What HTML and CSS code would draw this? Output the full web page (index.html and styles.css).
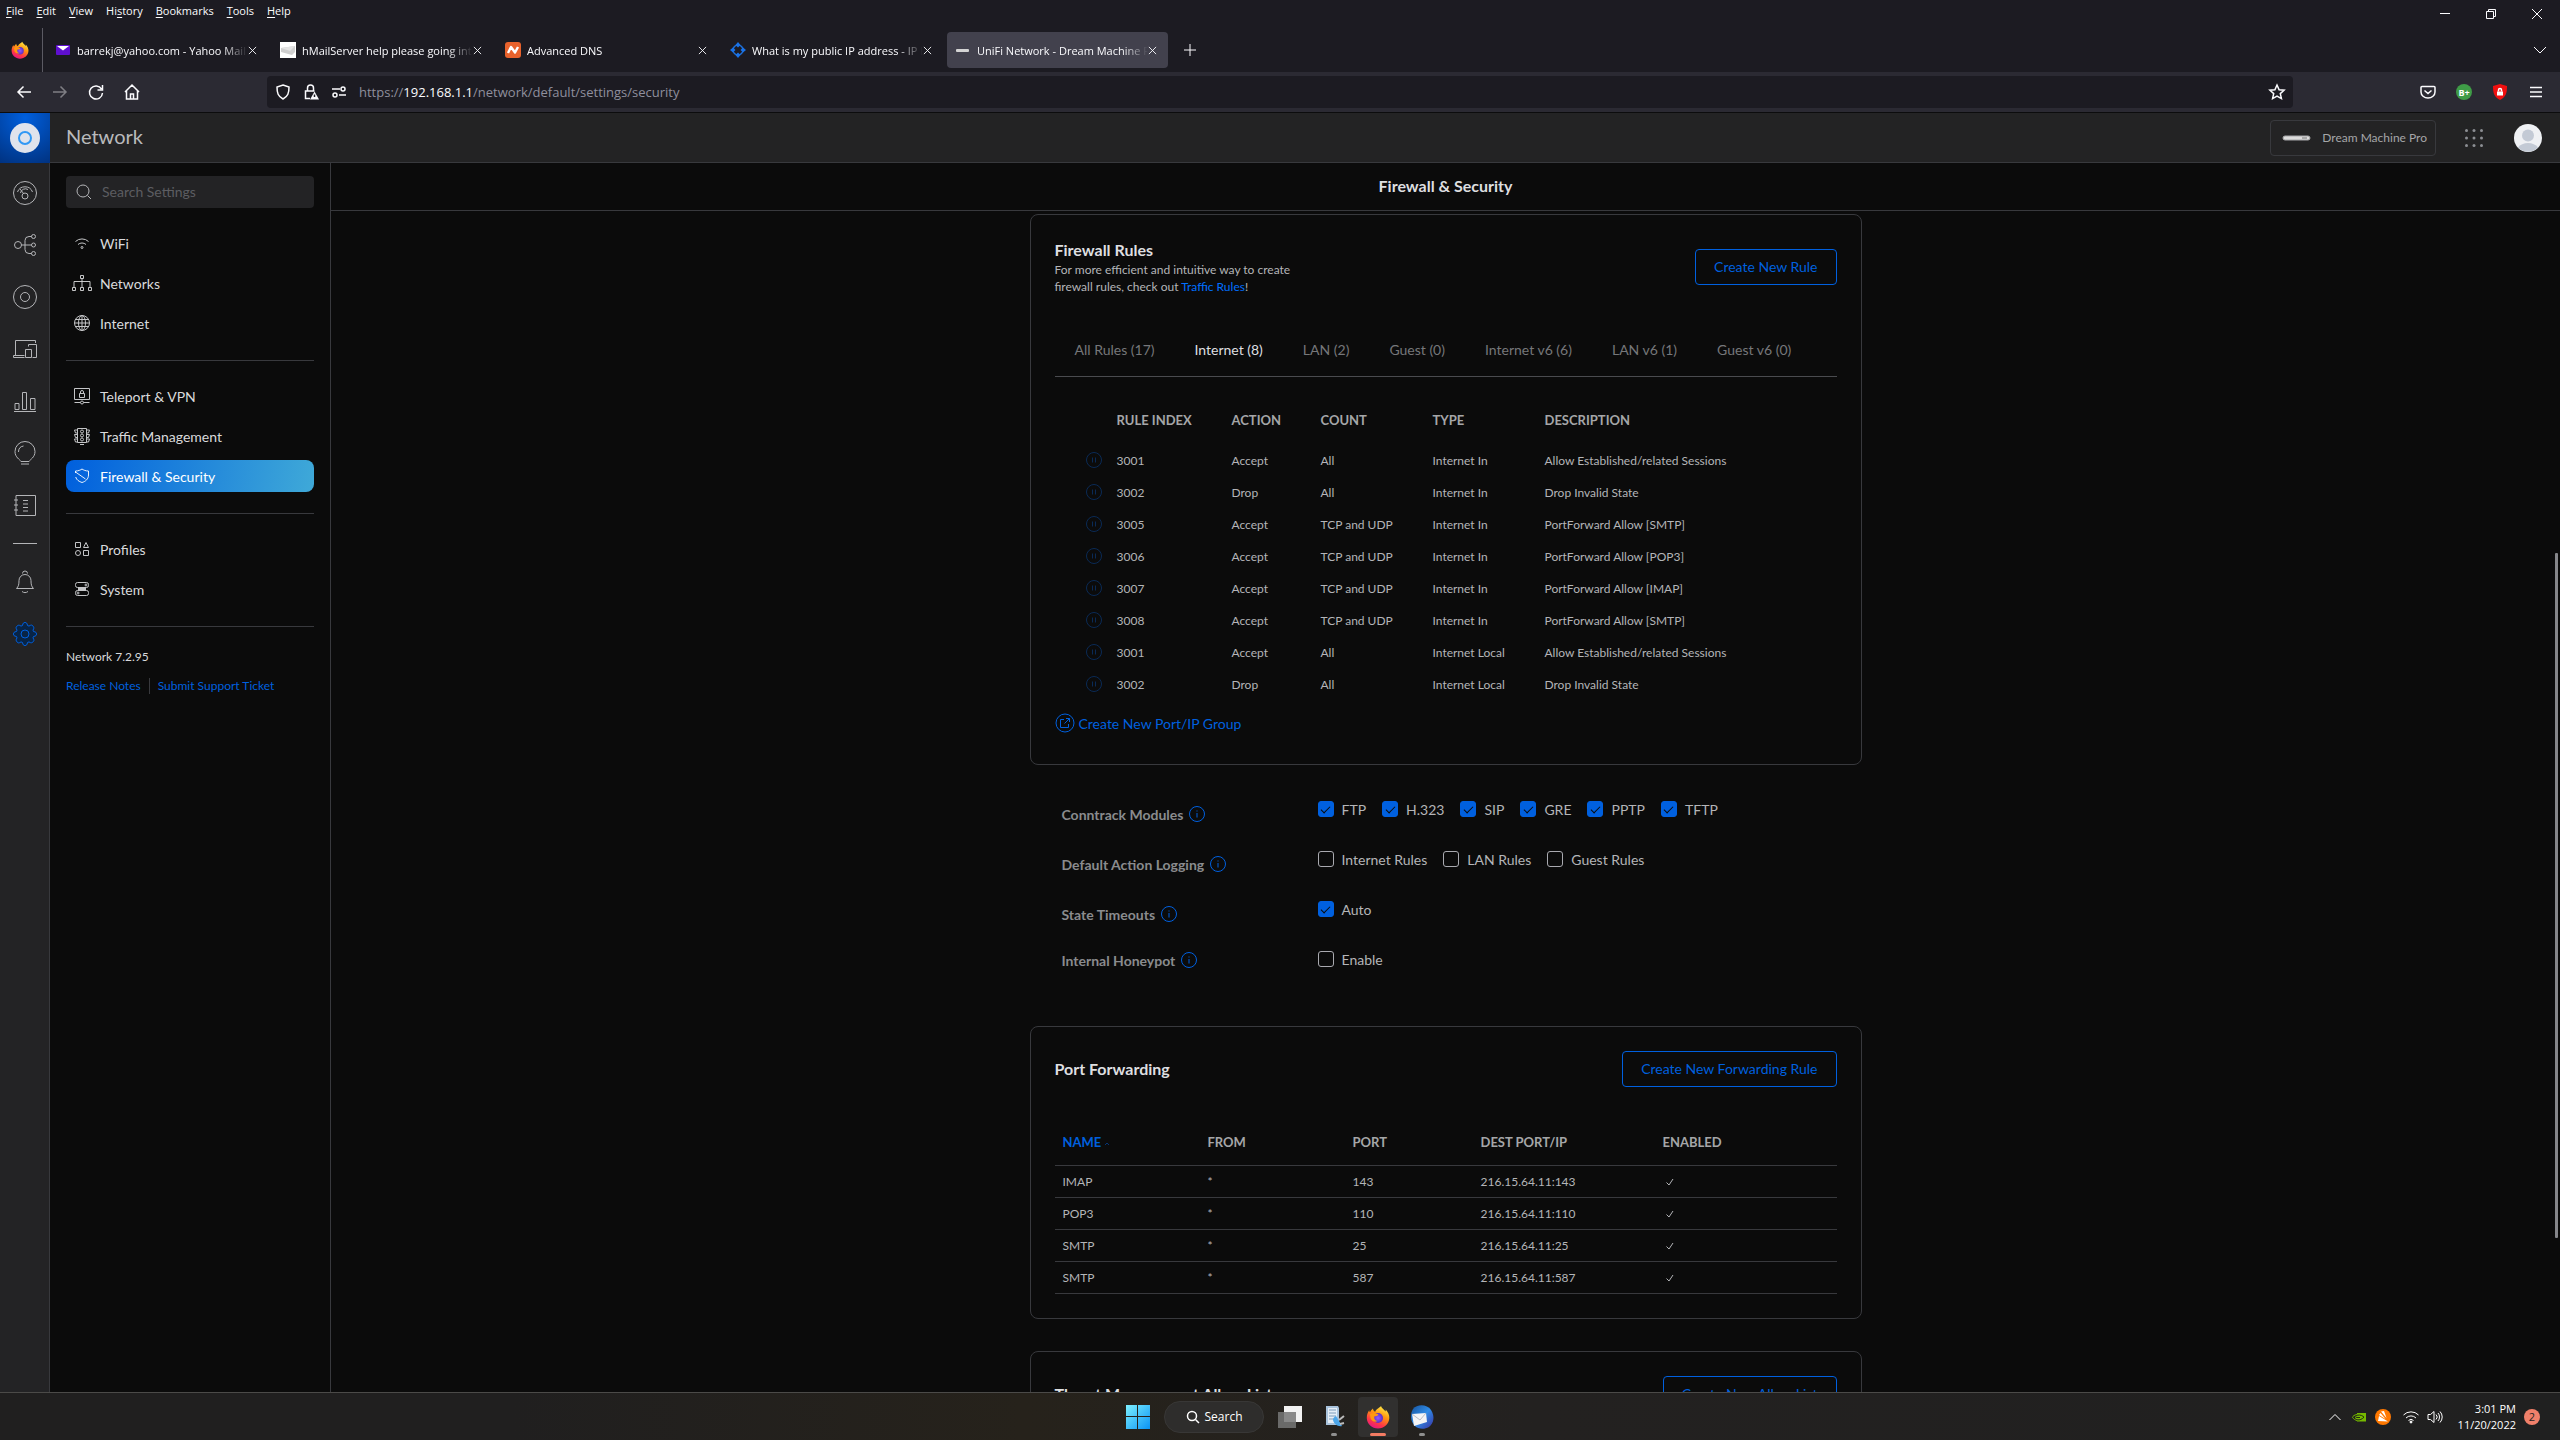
FILE: index.html
```html
<!DOCTYPE html>
<html lang="en">
<head>
  <meta charset="UTF-8">
  <meta name="viewport" content="width=device-width, initial-scale=1">
  <title>UniFi Network - Dream Machine Pro</title>
  <link rel="stylesheet" href="styles.css">
</head>
<body>
  <!-- shared icons -->
  <svg class="defs" aria-hidden="true">
    <defs>
      <linearGradient id="fox" x1="0.8" y1="0" x2="0.3" y2="1"><stop offset="0" stop-color="#fff44f"/><stop offset=".4" stop-color="#ff980e"/><stop offset=".75" stop-color="#ff3647"/><stop offset="1" stop-color="#e31587"/></linearGradient>
      <radialGradient id="foxball"><stop offset="0" stop-color="#9059ff"/><stop offset="1" stop-color="#5b2fc4"/></radialGradient>
      <linearGradient id="win" x1="0" y1="0" x2="1" y2="1"><stop offset="0" stop-color="#7df0ff"/><stop offset="1" stop-color="#0a93f5"/></linearGradient>
      <linearGradient id="bird" x1="0" y1="0" x2="1" y2="1"><stop offset="0" stop-color="#17539c"/><stop offset=".5" stop-color="#2f8be6"/><stop offset="1" stop-color="#3a2fa0"/></linearGradient>
    </defs>
    <symbol id="i-x" viewBox="0 0 10 10"><path d="M1 1l8 8M9 1l-8 8"/></symbol>
    <symbol id="i-firefox" viewBox="0 0 24 24">
      <path fill="url(#fox)" d="M15 1c.5 2 3 3.500 4.500 5.500.3-.8.300-1.500.2-2C22 7 23.500 10 23.300 13 23 19 18 23.500 12 23.500S1 19 .8 13C.7 9.500 2 7 3.200 5.300c.1 1 .4 1.500.8 2 .8-1.800 2-3 3-3.800 0 1.500.8 2.700 2.200 3.200C10.500 3.500 13.500 3 15 1z"/>
      <circle cx="12" cy="13" r="5" fill="url(#foxball)"/>
      <path fill="#ff980e" d="M4 9c3-1.500 5-1 8.500.5-1 1.500-2.500 1.700-4 1.800-.8 2.500.5 4.500 3 4.700-2.500 1.500-6 .5-7-3z"/>
    </symbol>
    <symbol id="i-info" viewBox="0 0 16 16"><circle cx="8" cy="8" r="7.500"/><path d="M8 7v4.500M8 4.500v1"/></symbol>
    <symbol id="i-pause" viewBox="0 0 16 16"><circle cx="8" cy="8" r="7.500"/><path d="M6.500 5.500v5M9.500 5.500v5"/></symbol>
    <symbol id="i-check" viewBox="0 0 8 8"><path d="M.5 4.500L3 7l4-6"/></symbol>
  </svg>

  <header class="browser">
    <div class="titlebar">
      <nav class="menubar">
        <button><u>F</u>ile</button>
        <button><u>E</u>dit</button>
        <button><u>V</u>iew</button>
        <button>Hi<u>s</u>tory</button>
        <button><u>B</u>ookmarks</button>
        <button><u>T</u>ools</button>
        <button><u>H</u>elp</button>
      </nav>
      <div class="winbtns">
        <button aria-label="Minimize"><svg viewBox="0 0 10 10"><path d="M0 4.500h10"/></svg></button>
        <button aria-label="Restore"><svg viewBox="0 0 10 10"><path d="M.5 2.500h7v7h-7zM2.500 2.500v-2h7v7h-2"/></svg></button>
        <button aria-label="Close"><svg viewBox="0 0 10 10"><path d="M0 0l10 10M10 0L0 10"/></svg></button>
      </div>
    </div>

    <div class="tabbar">
      <button class="fx" aria-label="Firefox View"><svg><use href="#i-firefox"/></svg></button>
      <div class="tabs">
        <div class="tab">
          <svg class="fav" viewBox="0 0 16 16"><rect x="1" y="3" width="14" height="10" rx="1" fill="#5f0fd0"/><path d="M2 4h12L8 8.500z" fill="#fff"/></svg>
          <span class="tab-text">barrekj@yahoo.com - Yahoo Mail</span>
          <button class="tab-x" aria-label="Close tab"><svg><use href="#i-x"/></svg></button>
        </div>
        <div class="tab">
          <svg class="fav" viewBox="0 0 16 16"><path d="M0 0h16v16H0z" fill="#fff"/><path d="M1 6l14-2v6l-3 3-11-3z" fill="#cfcfcf"/><path d="M1 6l9 3 5-5z" fill="#e4e4e4"/></svg>
          <span class="tab-text">hMailServer help please going into spam</span>
          <button class="tab-x" aria-label="Close tab"><svg><use href="#i-x"/></svg></button>
        </div>
        <div class="tab">
          <svg class="fav" viewBox="0 0 16 16"><rect width="16" height="16" rx="3" fill="#e8622c"/><path d="M3 11l3-6 4 5.500L13 5" fill="none" stroke="#fff" stroke-width="2.400" stroke-linejoin="round"/></svg>
          <span class="tab-text">Advanced DNS</span>
          <button class="tab-x" aria-label="Close tab"><svg><use href="#i-x"/></svg></button>
        </div>
        <div class="tab">
          <svg class="fav" viewBox="0 0 16 16"><circle cx="8" cy="8" r="5" fill="none" stroke="#1e6fd8" stroke-width="1.500"/><g fill="#1a73e8"><path d="M8 0l2.500 3L8 5.500 5.500 3zM8 10.500l2.500 2.500L8 16l-2.500-3zM0 8l3-2.500L5.500 8 3 10.500zM10.500 8L13 5.500 16 8l-3 2.500z"/></g></svg>
          <span class="tab-text">What is my public IP address - IP Lookup</span>
          <button class="tab-x" aria-label="Close tab"><svg><use href="#i-x"/></svg></button>
        </div>
        <div class="tab active">
          <svg class="fav" viewBox="0 0 16 16"><rect x="1" y="7" width="13" height="3" rx="1" fill="#d4d4d4"/></svg>
          <span class="tab-text">UniFi Network - Dream Machine Pro</span>
          <button class="tab-x" aria-label="Close tab"><svg><use href="#i-x"/></svg></button>
        </div>
        <button class="newtab" aria-label="New tab"><svg viewBox="0 0 12 12"><path d="M6 0v12M0 6h12"/></svg></button>
      </div>
      <button class="alltabs" aria-label="List all tabs"><svg viewBox="0 0 12 12"><path d="M0 3l6 6 6-6"/></svg></button>
    </div>

    <div class="toolbar">
      <div class="navbtns">
        <button aria-label="Back"><svg viewBox="0 0 16 16"><path d="M15 8H2M7.500 2.500L2 8l5.500 5.500"/></svg></button>
        <button class="dim" aria-label="Forward"><svg viewBox="0 0 16 16"><path d="M1 8h13M8.500 2.500L14 8l-5.500 5.500"/></svg></button>
        <button aria-label="Reload"><svg viewBox="0 0 16 16"><path d="M13.500 5A6.500 6.500 0 1 0 14.500 9M14.500 1v5H9.500"/></svg></button>
        <button aria-label="Home"><svg viewBox="0 0 16 16"><path d="M1 8l7-7 7 7M2.500 7v8h11V7M6.500 15v-5h3v5"/></svg></button>
      </div>
      <div class="urlbar">
        <svg viewBox="0 0 16 16"><path d="M8 1l6 2c0 6-1 9.500-6 12C3 12.500 2 9 2 3z"/></svg>
        <svg viewBox="0 0 16 16"><path d="M4.500 7V4a3 3 0 0 1 6 0v3M7 14.500H2.500V7h9"/><path d="M11.500 7.500L16 15.500H7z" fill="#fbfbfe" stroke="none"/><path d="M11.500 10.500v2.500" stroke="#1c1b22"/></svg>
        <svg viewBox="0 0 16 16"><path d="M1 5h8M8 11h7"/><circle cx="12" cy="5" r="2"/><circle cx="4" cy="11" r="2"/></svg>
        <div class="url" role="textbox" aria-label="Address">https://<b>192.168.1.1</b>/network/default/settings/security</div>
        <button aria-label="Bookmark this page"><svg viewBox="0 0 16 16"><path d="M8 1l2.100 4.700 5 .5-3.800 3.400 1.100 5L8 12l-4.400 2.600 1.100-5L.9 6.200l5-.5z"/></svg></button>
      </div>
      <div class="extbtns">
        <button aria-label="Pocket"><svg viewBox="0 0 16 16"><path d="M2 2.500h12a1 1 0 0 1 1 1V8A7 6 0 0 1 1 8V3.500a1 1 0 0 1 1-1zM4.500 6.500L8 9.500l3.500-3"/></svg></button>
        <button class="bplus">B+</button>
        <button aria-label="Shield"><svg viewBox="0 0 16 16"><path d="M8 0l7 2c0 7-1 11-7 14C2 13 1 9 1 2z" fill="#f01010" stroke="none"/><path d="M5 7.500h6v4H5z" fill="#fff" stroke="none"/><path d="M6.500 7.500V6a1.500 1.500 0 0 1 3 0v1.500" stroke="#fff"/></svg></button>
        <button aria-label="Menu"><svg viewBox="0 0 16 16"><path d="M2 3.500h12M2 8h12M2 12.500h12"/></svg></button>
      </div>
    </div>
  </header>

  <div class="app">
    <header class="apphead">
      <a class="logo" href="#" aria-label="UniFi OS"><svg viewBox="0 0 30 30"><circle cx="15" cy="15" r="15" fill="#dfe3ec"/><circle cx="15" cy="15" r="6" fill="none" stroke="#3098f5" stroke-width="2"/></svg></a>
      <span class="appname">Network</span>
      <button class="device"><svg viewBox="0 0 28 6"><rect x="0" y="1" width="27" height="4" rx="2" fill="#dcdcdc"/><path d="M19 3h5" stroke="#777"/></svg>Dream Machine Pro</button>
      <button class="grid9" aria-label="Applications"><svg viewBox="0 0 18 18"><g fill="#8c8e93"><circle cx="1.500" cy="1.500" r="1.500"/><circle cx="9" cy="1.500" r="1.500"/><circle cx="16.500" cy="1.500" r="1.500"/><circle cx="1.500" cy="9" r="1.500"/><circle cx="9" cy="9" r="1.500"/><circle cx="16.500" cy="9" r="1.500"/><circle cx="1.500" cy="16.500" r="1.500"/><circle cx="9" cy="16.500" r="1.500"/><circle cx="16.500" cy="16.500" r="1.500"/></g></svg></button>
      <button class="avatar" aria-label="Account"><svg viewBox="0 0 28 28"><circle cx="14" cy="14" r="14" fill="#eff1f4"/><circle cx="14" cy="11.500" r="6" fill="#c3cad5"/><path d="M4 23.500c4-6 16-6 20 0a14 14 0 0 1-20 0z" fill="#c3cad5"/></svg></button>
    </header>

    <div class="appbody">
      <nav class="rail">
        <a href="#" aria-label="Dashboard"><svg viewBox="0 0 24 24"><circle cx="12" cy="12" r="11.500"/><path d="M4.500 11a8 8 0 0 1 15 0M7.500 12a5 5 0 0 1 7.500-3.500M7 8l4 5"/><circle cx="12" cy="15" r="3"/></svg></a>
        <a href="#" aria-label="Topology"><svg viewBox="0 0 24 24"><circle cx="5" cy="12" r="3.500"/><circle cx="20.500" cy="3.500" r="2"/><circle cx="20.500" cy="12" r="2"/><circle cx="20.500" cy="20.500" r="2"/><path d="M8.500 12h10M18.500 3.500H16a4 4 0 0 0-4 4v9a4 4 0 0 0 4 4h2.500"/></svg></a>
        <a href="#" aria-label="UniFi Devices"><svg viewBox="0 0 24 24"><circle cx="12" cy="12" r="11.500"/><circle cx="12" cy="12" r="4.500"/></svg></a>
        <a href="#" aria-label="Client Devices"><svg viewBox="0 0 24 24"><path d="M2.500 18V3.500h20V6M.5 20.500v-2h11M.5 20.500h11M15.500 7.500h8v13h-4M12.500 20.500v-8h6v8zM15.500 7.500v2"/></svg></a>
        <a href="#" aria-label="Statistics"><svg viewBox="0 0 24 24"><path d="M2 14.500h4v6H2zM9.500 3.500h4v17h-4zM17.500 9.500h4.500v11h-4.500zM1 22.500h22"/></svg></a>
        <a href="#" aria-label="Insights"><svg viewBox="0 0 24 24"><path d="M8 20.500c-1-2-6-4-6-10a10 10 0 0 1 20 0c0 6-5 8-6 10zM5.500 11a6 6 0 0 1 5-6M8 23h8"/></svg></a>
        <a href="#" aria-label="System Log"><svg viewBox="0 0 24 24"><path d="M3 2.500h19.500v20H3zM1 7h4M1 12h4M1 17h4M10 7.500h5M10 11h5M10 14.500h5M10 18h5"/></svg></a>
        <span class="rail-line"></span>
        <a href="#" aria-label="Notifications"><svg viewBox="0 0 24 24"><path d="M3.500 18.500c2-2 2.500-4 2.500-8a6 6 0 0 1 12 0c0 4 .5 6 2.500 8zM9.500 3.500a2.500 2.500 0 0 1 5 0M9 21.500c2 1.500 4 1.500 6 0"/></svg></a>
        <a href="#" class="on" aria-label="Settings"><svg viewBox="0 0 24 24"><path fill="#082446" stroke-linejoin="round" d="M9.500 3.500C10 1 10.500.5 12 .5s2 .5 2.500 3l1.500.6c2-1.400 3-1.300 4 0s1.300 2 0 4l.5 1.400c2.500.5 3 1 3 2.500s-.5 2-3 2.500l-.5 1.400c1.300 2 1.200 3 0 4s-2 1.400-4 0l-1.500.6c-.5 2.500-1 3-2.500 3s-2-.5-2.500-3L8 19.900c-2 1.400-3 1.300-4 0s-1.300-2 0-4l-.5-1.400C1 14 .5 13.500.5 12s.5-2 3-2.500L4 8.100c-1.300-2-1.200-3 0-4s2-1.400 4 0z"/><circle cx="12" cy="12" r="4"/></svg></a>
      </nav>

      <aside class="side">
        <label class="search">
          <svg viewBox="0 0 16 16"><circle cx="7" cy="7" r="6"/><path d="M11.500 11.500L15 15"/></svg>
          <input type="text" placeholder="Search Settings" aria-label="Search Settings">
        </label>
        <nav class="side-group">
          <a href="#"><svg viewBox="0 0 20 20"><path d="M3.500 8.500a9.500 9.500 0 0 1 13 0M6 11.500a6 6 0 0 1 8 0"/><circle cx="10" cy="14.500" r="1"/></svg>WiFi</a>
          <a href="#"><svg viewBox="0 0 20 20"><path d="M8.500 2.500h3v3h-3zM.5 14.500h3v3h-3zM8.500 14.500h3v3h-3zM16.500 14.500h3v3h-3zM2 14.500v-6h16v6M10 5.500v9"/></svg>Networks</a>
          <a href="#"><svg viewBox="0 0 20 20"><circle cx="10" cy="10" r="7.500"/><ellipse cx="10" cy="10" rx="3.500" ry="7.500"/><path d="M10 2.500v15M2.500 10h15M3.500 6.500h13M3.500 13.500h13"/></svg>Internet</a>
        </nav>
        <nav class="side-group">
          <a href="#"><svg viewBox="0 0 20 20"><path d="M2.500 2.500h15v11h-15zM7.500 7.500h5v4h-5zM8.500 7.500V6a1.500 1.500 0 0 1 3 0v1.500M2.500 16.500h6M11.500 16.500h6"/><circle cx="10" cy="16.500" r="1.500"/></svg>Teleport &amp; VPN</a>
          <a href="#"><svg viewBox="0 0 20 20"><path d="M5.500 2.500h9v14h-9zM8 18.500h4M5.500 4H2.500l1 3h2M5.500 8.500h-3l1 3h2M5.500 13h-3l1 3h2M14.500 4h3l-1 3h-2M14.500 8.500h3l-1 3h-2M14.500 13h3l-1 3h-2"/><circle cx="10" cy="5.500" r="1.500"/><circle cx="10" cy="9.500" r="1.500"/><circle cx="10" cy="13.500" r="1.500"/></svg>Traffic Management</a>
          <a href="#" class="current"><svg viewBox="0 0 20 20"><path d="M3.500 7V5c3 0 5-1 6.500-2 1.500 1 3.500 2 6.500 2v4c0 4-3 6.500-6.500 7.500-3-1-5.500-2.500-6.300-5.500M3.500 6l10 7"/></svg>Firewall &amp; Security</a>
        </nav>
        <nav class="side-group">
          <a href="#"><svg viewBox="0 0 20 20"><path d="M3.500 3.500h5v5h-5zM11.500 11.500h5v5h-5zM14 3.500l2.500 5h-5z"/><circle cx="6" cy="14" r="2.500"/></svg>Profiles</a>
          <a href="#"><svg viewBox="0 0 20 20"><rect x="3.500" y="3.500" width="13" height="5" rx="2"/><rect x="3.500" y="11.500" width="13" height="5" rx="2"/><path d="M6 10h8" stroke-width="2"/><circle cx="14" cy="6" r="1"/><circle cx="6" cy="14" r="1"/></svg>System</a>
        </nav>
        <div class="version">Network 7.2.95</div>
        <div class="side-links"><a href="#">Release Notes</a><a href="#">Submit Support Ticket</a></div>
      </aside>

      <main class="page">
        <h1>Firewall &amp; Security</h1>
        <div class="scroll">
          <div class="content">
            <section class="card">
              <div class="card-head">
                <div>
                  <h2>Firewall Rules</h2>
                  <p>For more efficient and intuitive way to create firewall rules, check out <a href="#">Traffic Rules</a>!</p>
                </div>
                <button class="btn">Create New Rule</button>
              </div>
              <div class="filters">
                <button>All Rules (17)</button>
                <button class="on">Internet (8)</button>
                <button>LAN (2)</button>
                <button>Guest (0)</button>
                <button>Internet v6 (6)</button>
                <button>LAN v6 (1)</button>
                <button>Guest v6 (0)</button>
              </div>
              <table class="rules">
                <colgroup><col class="c-pause"><col class="c-index"><col class="c-action"><col class="c-count"><col class="c-type"><col></colgroup>
                <thead><tr><th></th><th>RULE INDEX</th><th>ACTION</th><th>COUNT</th><th>TYPE</th><th>DESCRIPTION</th></tr></thead>
                <tbody>
                  <tr><td><button class="pause" aria-label="Pause"><svg><use href="#i-pause"/></svg></button></td><td>3001</td><td>Accept</td><td>All</td><td>Internet In</td><td>Allow Established/related Sessions</td></tr>
                  <tr><td><button class="pause" aria-label="Pause"><svg><use href="#i-pause"/></svg></button></td><td>3002</td><td>Drop</td><td>All</td><td>Internet In</td><td>Drop Invalid State</td></tr>
                  <tr><td><button class="pause" aria-label="Pause"><svg><use href="#i-pause"/></svg></button></td><td>3005</td><td>Accept</td><td>TCP and UDP</td><td>Internet In</td><td>PortForward Allow [SMTP]</td></tr>
                  <tr><td><button class="pause" aria-label="Pause"><svg><use href="#i-pause"/></svg></button></td><td>3006</td><td>Accept</td><td>TCP and UDP</td><td>Internet In</td><td>PortForward Allow [POP3]</td></tr>
                  <tr><td><button class="pause" aria-label="Pause"><svg><use href="#i-pause"/></svg></button></td><td>3007</td><td>Accept</td><td>TCP and UDP</td><td>Internet In</td><td>PortForward Allow [IMAP]</td></tr>
                  <tr><td><button class="pause" aria-label="Pause"><svg><use href="#i-pause"/></svg></button></td><td>3008</td><td>Accept</td><td>TCP and UDP</td><td>Internet In</td><td>PortForward Allow [SMTP]</td></tr>
                  <tr><td><button class="pause" aria-label="Pause"><svg><use href="#i-pause"/></svg></button></td><td>3001</td><td>Accept</td><td>All</td><td>Internet Local</td><td>Allow Established/related Sessions</td></tr>
                  <tr><td><button class="pause" aria-label="Pause"><svg><use href="#i-pause"/></svg></button></td><td>3002</td><td>Drop</td><td>All</td><td>Internet Local</td><td>Drop Invalid State</td></tr>
                </tbody>
              </table>
              <a class="group-link" href="#"><svg viewBox="0 0 20 20"><circle cx="10" cy="10" r="9"/><path d="M9 6.500H5.500v8h8V11M11 5.500h3.500V9M14.500 5.500L9.500 10.500"/></svg>Create New Port/IP Group</a>
            </section>

            <section class="settings">
              <div class="setting">
                <div class="setting-label">Conntrack Modules <button class="info" aria-label="About conntrack modules"><svg><use href="#i-info"/></svg></button></div>
                <div class="checks">
                  <label><input type="checkbox" checked>FTP</label>
                  <label><input type="checkbox" checked>H.323</label>
                  <label><input type="checkbox" checked>SIP</label>
                  <label><input type="checkbox" checked>GRE</label>
                  <label><input type="checkbox" checked>PPTP</label>
                  <label><input type="checkbox" checked>TFTP</label>
                </div>
              </div>
              <div class="setting">
                <div class="setting-label">Default Action Logging <button class="info" aria-label="About default action logging"><svg><use href="#i-info"/></svg></button></div>
                <div class="checks">
                  <label><input type="checkbox">Internet Rules</label>
                  <label><input type="checkbox">LAN Rules</label>
                  <label><input type="checkbox">Guest Rules</label>
                </div>
              </div>
              <div class="setting">
                <div class="setting-label">State Timeouts <button class="info" aria-label="About state timeouts"><svg><use href="#i-info"/></svg></button></div>
                <div class="checks"><label><input type="checkbox" checked>Auto</label></div>
              </div>
              <div class="setting flat">
                <div class="setting-label">Internal Honeypot <button class="info" aria-label="About internal honeypot"><svg><use href="#i-info"/></svg></button></div>
                <div class="checks"><label><input type="checkbox">Enable</label></div>
              </div>
            </section>

            <section class="card">
              <div class="card-head">
                <h2>Port Forwarding</h2>
                <button class="btn">Create New Forwarding Rule</button>
              </div>
              <table class="forwards">
                <colgroup><col class="c-name"><col class="c-from"><col class="c-port"><col class="c-dest"><col></colgroup>
                <thead><tr><th class="sorted">NAME <svg viewBox="0 0 6 6"><path d="M1 4l2-2 2 2"/></svg></th><th>FROM</th><th>PORT</th><th>DEST PORT/IP</th><th>ENABLED</th></tr></thead>
                <tbody>
                  <tr><td>IMAP</td><td>*</td><td>143</td><td>216.15.64.11:143</td><td><svg class="tick"><use href="#i-check"/></svg></td></tr>
                  <tr><td>POP3</td><td>*</td><td>110</td><td>216.15.64.11:110</td><td><svg class="tick"><use href="#i-check"/></svg></td></tr>
                  <tr><td>SMTP</td><td>*</td><td>25</td><td>216.15.64.11:25</td><td><svg class="tick"><use href="#i-check"/></svg></td></tr>
                  <tr><td>SMTP</td><td>*</td><td>587</td><td>216.15.64.11:587</td><td><svg class="tick"><use href="#i-check"/></svg></td></tr>
                </tbody>
              </table>
            </section>

            <section class="card">
              <div class="card-head">
                <h2>Threat Management Allow List</h2>
                <button class="btn">Create New Allow List</button>
              </div>
            </section>
          </div>
          <span class="thumb"></span>
        </div>
      </main>
    </div>
  </div>

  <footer class="taskbar">
    <div class="tasks">
      <button aria-label="Start"><svg viewBox="0 0 24 24"><path fill="url(#win)" d="M0 0h11v11H0zM12 0h12v11H12zM0 12h11v12H0zM12 12h12v12H12z"/></svg></button>
      <button class="tsearch"><svg viewBox="0 0 14 14"><circle cx="6" cy="6" r="4.500"/><path d="M9.500 9.500L13 13"/></svg>Search</button>
      <button aria-label="Task view"><svg viewBox="0 0 24 24"><path fill="#f2f2f2" d="M6 1h18v16H6z"/><path fill="#777" fill-opacity=".85" d="M0 7h18v16H0z"/></svg></button>
      <button class="run" aria-label="Server"><svg viewBox="0 0 24 24"><path fill="#a9c3dc" d="M4 1h12l1 2v17H4z"/><path fill="#e5eef7" d="M6 3h9v15H6z"/><path stroke="#7c9cbb" d="M7 5h7M7 8h7M7 11h7M7 14h5"/><path fill="#4ba6ea" d="M11 15c1 4 5 7 9 6L14 11c-2 1-3 2-3 4z"/><path stroke="#bbb" stroke-width="2" d="M17 15l5-4M18 19l4-1"/></svg></button>
      <button class="run open" aria-label="Firefox"><svg><use href="#i-firefox"/></svg></button>
      <button class="run" aria-label="Thunderbird"><svg viewBox="0 0 24 24"><path fill="url(#bird)" d="M3 4C7-1 17-1 21 5c4 6 3 13-2 17-5 3-11 2-14-1C0 16 0 9 3 4z"/><path fill="#f4f4f6" d="M2 9l14-1 1 9-13 4z"/><path fill="none" stroke="#b9bcc4" d="M2 9l8 6 6-7"/></svg></button>
    </div>
    <div class="tray">
      <div class="tray-apps">
        <svg viewBox="0 0 16 16"><path d="M2.500 11L8 5.500l5.500 5.500"/></svg>
        <svg viewBox="0 0 16 16"><path fill="#76b900" stroke="none" d="M6 4h9v8.500H6z"/><path stroke="#1f2a12" d="M6 6.200c4-.8 6 1 7 2-2 2-4 3-7 2.600M6 8.500h3"/><path stroke="#76b900" d="M6 5.500C3 6 2 7 1.500 8.300 2.500 10 4 11 6 11.500M6 7.500c-1 .2-1.500.6-2 1 .5.600 1 1 2 1.200"/></svg>
        <svg viewBox="0 0 16 16"><circle cx="8" cy="8" r="8" fill="#ff7800" stroke="none"/><path fill="#fff" stroke="none" d="M6 2.500l3-.5 2.500 7zM4 6l1.500-2 5 6zM3 12l1-5 9 5.500z"/></svg>
      </div>
      <svg viewBox="0 0 16 16"><path d="M.5 6a10.500 10.500 0 0 1 15 0M3 9a7 7 0 0 1 10 0M5.500 11.500a3.500 3.500 0 0 1 5 0"/><circle cx="8" cy="13" r="1" fill="#fff"/></svg>
      <svg viewBox="0 0 16 16"><path d="M1 5.500h2.500L7 2.500v11L3.500 10.500H1zM9 5.500a3.500 3.500 0 0 1 0 5M11 4a6 6 0 0 1 0 8M13 2.500a8 8 0 0 1 0 11"/></svg>
      <div class="clock">3:01 PM<br>11/20/2022</div>
      <span class="badge">2</span>
    </div>
  </footer>
</body>
</html>
```
FILE: styles.css
```css
* { margin: 0; padding: 0; box-sizing: border-box; }
html, body { height: 100%; }
body {
  display: flex;
  flex-direction: column;
  overflow: hidden;
  background: #0b0b0b;
  color: #b4b5b8;
  font-family: Lato, sans-serif;
  font-size: 14px;
}
button {
  border: none;
  background: none;
  color: inherit;
  font: inherit;
  cursor: pointer;
}
a { color: #0060df; text-decoration: none; }
svg { display: block; fill: none; stroke: currentColor; overflow: visible; }
.defs { position: absolute; width: 0; height: 0; }

/* browser chrome */
.browser {
  flex: none;
  background: #1c1b22;
  color: #fbfbfe;
  font-family: "Open Sans", sans-serif;
  font-size: 11px;
}
.titlebar {
  display: flex;
  justify-content: space-between;
  height: 28px;
}
.menubar { display: flex; gap: 1px; height: 20px; }
.menubar button { padding: 0 6px; }
.menubar u { text-underline-offset: 2px; }
.winbtns { display: flex; }
.winbtns button {
  display: grid;
  place-items: center;
  width: 46px;
}
.winbtns svg { width: 10px; height: 10px; }
.tabbar { display: flex; height: 44px; }
.fx {
  display: grid;
  place-items: center;
  width: 43px;
  padding-right: 2px;
  border-right: 1px solid #5b5a63;
}
.fx svg { width: 18px; height: 18px; stroke: none; }
.tabs {
  display: flex;
  flex: 1;
  align-items: center;
  gap: 4px;
  padding-left: 4px;
}
.tab {
  display: flex;
  align-items: center;
  width: 221px;
  height: 36px;
  padding: 0 11px 0 8px;
  border-radius: 4px;
}
.tab.active { background: #42414d; }
.fav { flex: none; width: 16px; height: 16px; margin-right: 6px; stroke: none; }
.tab-text {
  flex: 1;
  overflow: hidden;
  white-space: nowrap;
  mask-image: linear-gradient(90deg, #000 85%, transparent);
}
.tab-x svg { width: 9px; height: 9px; }
.newtab { padding: 0 12px; }
.newtab svg { width: 12px; height: 12px; }
.alltabs { padding: 0 14px; }
.alltabs svg { width: 12px; height: 12px; }
.toolbar {
  display: flex;
  align-items: center;
  height: 41px;
  background: #2b2a33;
  border-bottom: 1px solid #0c0c0d;
}
.toolbar svg { width: 16px; height: 16px; stroke-width: 1.5; }
.navbtns { display: flex; gap: 20px; width: 267px; padding-left: 16px; }
.dim { opacity: .4; }
.urlbar {
  display: flex;
  flex: 1;
  align-items: center;
  gap: 12px;
  height: 32px;
  padding: 0 8px;
  border-radius: 4px;
  background: #1c1b22;
}
.url { flex: 1; color: #8f8f9d; font-size: 13px; }
.url b { color: #fbfbfe; font-weight: 400; }
.extbtns {
  display: flex;
  align-items: center;
  justify-content: flex-end;
  gap: 20px;
  width: 267px;
  padding-right: 16px;
}
.bplus {
  width: 16px;
  height: 16px;
  border-radius: 50%;
  background: #3f9c47;
  color: #fff;
  font-size: 9px;
  font-weight: 700;
}

/* app header */
.app {
  display: flex;
  flex: 1;
  flex-direction: column;
  min-height: 0;
}
.apphead {
  display: flex;
  flex: none;
  align-items: center;
  height: 50px;
  padding-right: 18px;
  border-bottom: 1px solid #38393d;
  background: #232324;
}
.logo {
  display: grid;
  place-items: center;
  width: 50px;
  height: 50px;
  background: radial-gradient(circle at 50% 10%, #005fdd, #003280);
}
.logo svg { width: 30px; height: 30px; stroke: none; }
.appname { flex: 1; padding: 0 0 3px 16px; color: #b9babc; font-size: 20px; }
.device {
  display: flex;
  align-items: center;
  gap: 11px;
  height: 36px;
  padding: 0 8px 0 12px;
  border: 1px solid #38393d;
  border-radius: 4px;
  color: #a5a6a8;
  font-size: 12px;
}
.device svg { width: 28px; height: 6px; }
.grid9 { margin: 0 31px 0 29px; }
.grid9 svg { width: 18px; height: 18px; stroke: none; }
.avatar svg { width: 28px; height: 28px; stroke: none; }

/* left rail */
.appbody { display: flex; flex: 1; min-height: 0; }
.rail {
  display: flex;
  flex: none;
  flex-direction: column;
  align-items: center;
  gap: 28px;
  width: 50px;
  padding-top: 18px;
  border-right: 1px solid #38393d;
  background: #232325;
}
.rail a { color: #b4b5b8; }
.rail a.on { color: #0060df; }
.rail svg { width: 24px; height: 24px; }
.rail-line { width: 24px; height: 1px; margin: -2px 0; background: #b4b5b8; }

/* settings menu */
.side {
  flex: none;
  width: 281px;
  padding: 13px 16px;
  border-right: 1px solid #38393d;
}
.search {
  display: flex;
  align-items: center;
  gap: 10px;
  height: 32px;
  margin-bottom: 19px;
  padding: 0 10px;
  border-radius: 4px;
  background: #232325;
}
.search svg { width: 16px; height: 16px; }
.search input {
  flex: 1;
  padding-bottom: 2px;
  border: none;
  outline: none;
  background: none;
  color: #d0d1d3;
  font: inherit;
}
.search input::placeholder { color: #5c5d61; opacity: 1; }
.side-group {
  display: flex;
  flex-direction: column;
  gap: 8px;
  margin-bottom: 19px;
  padding-bottom: 21px;
  border-bottom: 1px solid #38393d;
}
.side-group a {
  display: flex;
  align-items: center;
  gap: 8px;
  height: 32px;
  padding: 0 6px;
  border-radius: 8px;
  color: #d9dadc;
}
.side-group a.current {
  background: linear-gradient(100deg, #005fdd, #3fa9d8);
  color: #fff;
}
.side-group svg { width: 20px; height: 20px; opacity: .9; }
.version { padding: 3px 0 13px; color: #d9dadc; font-size: 12px; line-height: 16px; }
.side-links { display: flex; font-size: 12px; line-height: 16px; }
.side-links a + a { margin-left: 8px; padding-left: 8px; border-left: 1px solid #38393d; }

/* page */
.page { display: flex; flex: 1; flex-direction: column; min-width: 0; }
h1 {
  flex: none;
  height: 48px;
  border-bottom: 1px solid #38393d;
  color: #dedfe0;
  font-size: 16px;
  line-height: 46px;
  text-align: center;
}
.scroll { position: relative; flex: 1; overflow: hidden; }
.thumb {
  position: absolute;
  top: 29%;
  right: 2px;
  width: 3px;
  height: 58%;
  border-radius: 1px;
  background: #85868a;
}
.content { max-width: 832px; margin: 0 auto; padding-top: 3px; }
.card {
  margin-bottom: 32px;
  padding: 24px;
  border: 1px solid #38393d;
  border-radius: 8px;
}
.card-head { display: flex; align-items: center; justify-content: space-between; }
h2 { color: #dedfe0; font-size: 16px; line-height: 22px; }
.card-head p { max-width: 250px; font-size: 12px; line-height: 17px; }
.card-head p a { color: #006fff; }
.btn {
  height: 36px;
  padding: 0 18px 2px;
  border: 1px solid #0060df;
  border-radius: 4px;
  color: #0060df;
}
.filters {
  display: flex;
  height: 52px;
  margin-top: 30px;
  border-bottom: 1px solid #4a4b4f;
}
.filters button { padding: 0 20px 2px; color: #76777a; }
.filters .on { color: #dedfe0; }

table { width: 100%; table-layout: fixed; border-spacing: 0; font-size: 12px; text-align: left; }
th { color: #a5a6a8; font-size: 13px; }
.rules { margin-top: 18px; }
.rules th { height: 49px; }
.rules td { height: 32px; }
.c-pause { width: 62px; }
.c-index { width: 115px; }
.c-action { width: 89px; }
.c-count { width: 112px; }
.c-type { width: 112px; }
.pause { display: block; margin-left: 31px; color: #0a2a55; }
.pause svg { width: 16px; height: 16px; }
.group-link { display: flex; align-items: center; gap: 4px; height: 34px; margin-top: 6px; }
.group-link svg { width: 20px; height: 20px; }

.settings { padding: 2px 32px 27px; }
.setting { display: flex; height: 50px; }
.setting-label {
  display: flex;
  align-items: center;
  gap: 6px;
  width: 256px;
  height: 30px;
  color: #8a8b8e;
  font-weight: 700;
}
.setting.flat .setting-label { height: 22px; }
.info { color: #0060df; }
.info svg { width: 16px; height: 16px; }
.checks { display: flex; gap: 16px; height: 20px; }
.checks label { display: flex; align-items: center; gap: 8px; }
.checks input {
  display: grid;
  place-items: center;
  width: 16px;
  height: 16px;
  border: 1px solid #a9aab0;
  border-radius: 3px;
  appearance: none;
}
.checks input:checked { border-color: #0060df; background: #0060df; }
.checks input:checked::after {
  content: "";
  width: 8px;
  height: 4px;
  margin-bottom: 2px;
  border: solid #0b0b0b;
  border-width: 0 0 1px 1px;
  transform: rotate(-45deg);
}

.forwards { margin-top: 32px; }
.forwards th { height: 47px; padding: 0 8px; border-bottom: 1px solid #38393d; }
.forwards td { height: 32px; padding: 0 8px; border-bottom: 1px solid #38393d; }
.c-name, .c-from { width: 145px; }
.c-port { width: 128px; }
.c-dest { width: 182px; }
th.sorted { color: #0060df; }
.sorted svg { display: inline-block; width: 6px; height: 6px; opacity: .5; }
.tick { width: 8px; height: 8px; margin-left: 3px; }

/* taskbar */
.taskbar {
  display: flex;
  position: relative;
  flex: none;
  align-items: center;
  justify-content: center;
  height: 48px;
  border-top: 1px solid #4b4a48;
  background: linear-gradient(90deg, #201f1f, #201f1f 20%, #26221b 40%, #232120 60%, #202020);
  color: #fff;
  font-family: "Open Sans", sans-serif;
  font-size: 11px;
}
.tasks { display: flex; align-items: center; gap: 4px; }
.tasks button {
  display: flex;
  position: relative;
  align-items: center;
  justify-content: center;
  width: 40px;
  height: 40px;
  border-radius: 4px;
}
.tasks svg { width: 24px; height: 24px; stroke: none; }
.tasks .tsearch {
  gap: 5px;
  width: 100px;
  height: 32px;
  margin: 0 2px;
  border: 1px solid #383736;
  border-radius: 16px;
  background: #2e2d2c;
  font-size: 12px;
}
.tasks .tsearch svg { width: 14px; height: 14px; stroke: #fff; stroke-width: 1.5; }
.tasks .open { background: #31302f; }
.run::after {
  content: "";
  position: absolute;
  bottom: 1px;
  width: 6px;
  height: 3px;
  border-radius: 2px;
  background: #8f8f8f;
}
.run.open::after { width: 16px; background: #f47c63; }
.tray {
  display: flex;
  position: absolute;
  right: 20px;
  align-items: center;
  gap: 8px;
}
.tray-apps { display: flex; gap: 8px; padding-right: 4px; }
.tray svg { width: 16px; height: 16px; }
.clock { padding-left: 7px; line-height: 16px; text-align: right; }
.badge {
  width: 16px;
  height: 16px;
  border-radius: 50%;
  background: #f0806a;
  color: #222;
  line-height: 16px;
  text-align: center;
}
```
